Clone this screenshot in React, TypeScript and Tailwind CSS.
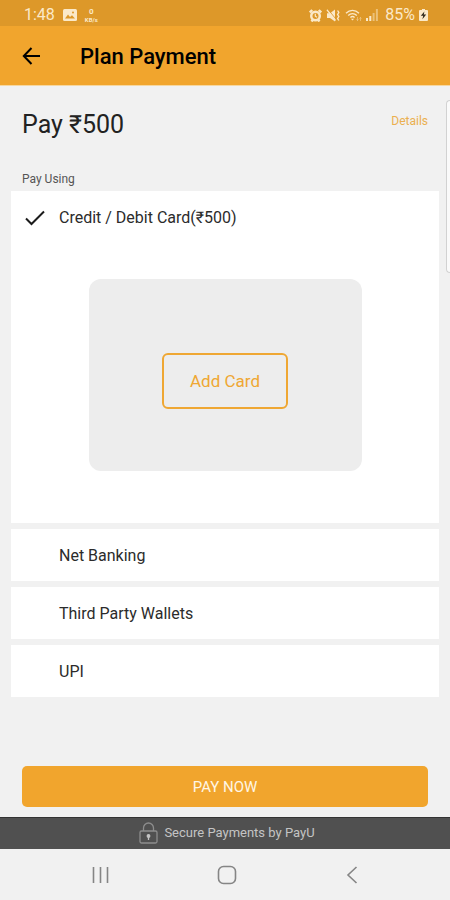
import { useState } from "react";

const methods = [
  { id: "card", label: "Credit / Debit Card(₹500)" },
  { id: "netbanking", label: "Net Banking" },
  { id: "wallets", label: "Third Party Wallets" },
  { id: "upi", label: "UPI" },
];

function StatusBar() {
  return (
    <div className="flex h-[26px] items-center justify-between bg-[#dd9829] pl-6 pr-[22px] pt-1 text-[#fbe9c8]">
      <div className="flex items-center gap-2">
        <span className="text-base leading-5">1:48</span>
        <svg className="h-3 w-[14px]" viewBox="0 0 14 12" fill="none">
          <rect width="14" height="12" rx="1.5" fill="currentColor" />
          <path d="M2 9.5 5 5.5l2 2.4 2-1.6 3 3.2z" fill="#dd9829" />
          <circle cx="10" cy="3.5" r="1" fill="#dd9829" />
        </svg>
        {/* network speed */}
        <span className="flex flex-col items-center font-bold">
          <span className="text-[8px] leading-[9px]">0</span>
          <span className="text-[6px] leading-[7px]">KB/s</span>
        </span>
      </div>

      <div className="flex items-center gap-1">
        {/* alarm */}
        <svg className="h-[13px] w-[13px]" viewBox="0 0 13 13" fill="none">
          <circle cx="6.5" cy="7" r="5.5" fill="currentColor" />
          <path d="M.8 3.5 3.2 1M12.2 3.5 9.8 1M2.5 12.5l1.5-2M10.5 12.5 9 10.5" stroke="currentColor" strokeWidth="2.4" />
          <circle cx="6.5" cy="7" r="3" fill="#dd9829" />
          <path d="M6.3 4.8V7.2L8 8.3" stroke="currentColor" strokeWidth="1.2" />
        </svg>
        {/* vibrate / muted */}
        <svg className="h-[13px] w-[14px]" viewBox="0 0 14 13" fill="none">
          <path d="M1 4.2h3L9 .5v12L4 9H1z" fill="currentColor" />
          <path d="M1 .8 9.5 11.5" stroke="currentColor" strokeWidth="1.4" />
          <path d="M2 .2 10 10.2" stroke="#dd9829" strokeWidth=".8" />
          <path d="m11.6 1.5 1.2 2-1.2 2 1.2 2-1.2 2 1.2 2" stroke="currentColor" strokeWidth="1.4" />
        </svg>
        {/* wifi */}
        <svg className="ml-px h-[13px] w-[17px]" viewBox="0 0 17 13" fill="none">
          <path d="M1 4.3C4.8.5 10.2.5 14 4.3M3.2 6.5c2.5-2.5 6.1-2.5 8.6 0M5.4 8.5c1.2-1.2 3-1.2 4.2 0" stroke="currentColor" strokeWidth="1.3" />
          <path d="m7.5 11.5-1.6-1.8h3.2z" fill="currentColor" />
          <path d="M12.5 8v3.5m-1-1.2 1 1.2 1-1.2M15.5 12V8.5m-1 1 1-1 1 1" stroke="currentColor" strokeWidth=".7" opacity=".6" />
        </svg>
        {/* signal */}
        <svg className="h-3 w-3" viewBox="0 0 12 12" fill="currentColor">
          <path d="M0 9h2v3H0zM3.3 7h2v5h-2z" />
          <path d="M6.6 4h2v8h-2zM9.9 0h2v12h-2z" opacity=".5" />
        </svg>
        <span className="ml-[3px] text-base leading-5">85%</span>
        <svg className="h-3 w-[9px]" viewBox="0 0 9 12">
          <path d="M3 0h3v1h2q1 0 1 1v9q0 1-1 1H1q-1 0-1-1V2q0-1 1-1h2z" fill="currentColor" />
          <path d="M5.4 2.4 1.8 6.8h2.4l-.8 3.4 3.8-4.6H4.8z" fill="#30291c" />
        </svg>
      </div>
    </div>
  );
}

function Check() {
  return (
    <svg className="h-4 w-5" viewBox="0 0 20 16" fill="none">
      <path d="m1 8.5 5.5 5.5L19 1.5" stroke="#1b1b1b" strokeWidth="2" />
    </svg>
  );
}

export default function App() {
  const [selected, setSelected] = useState("card");

  return (
    <div className="relative flex min-h-screen flex-col bg-[#f1f1f1] font-[Roboto,sans-serif] text-[#2b2b2b]">
      <StatusBar />

      <header className="flex h-[60px] items-center gap-[38px] border-b border-[#f6d7a0] bg-[#f1a52d] px-[22px] text-black">
        <button type="button" aria-label="Back">
          <svg className="h-5 w-5" viewBox="0 0 20 20" fill="none">
            <path d="M18 10H2M9.5 2 1.8 10l7.7 8" stroke="currentColor" strokeWidth="2" />
          </svg>
        </button>
        <h1 className="pt-0.5 text-[22px] font-medium leading-7">Plan Payment</h1>
      </header>

      <main className="flex grow flex-col pb-[10px]">
        <div className="flex items-center justify-between px-[22px] pt-[23px]">
          <h2 className="text-[25px] leading-8 text-[#222]">Pay ₹500</h2>
          <a href="#details" className="mb-2 text-xs leading-4 text-[#ebb04f]">Details</a>
        </div>
        <p className="mt-[30px] px-[22px] text-xs leading-4 text-[#555]">Pay Using</p>

        <div className="mx-[11px] mt-1 flex flex-col gap-[6px]">
          {methods.map((m) => (
            <section key={m.id} className="bg-white">
              <button
                type="button"
                aria-pressed={selected === m.id}
                onClick={() => setSelected(m.id)}
                className="flex h-[52px] w-full items-center pl-[14px] pt-0.5 text-left text-base"
              >
                <span className="w-[34px]">{selected === m.id && <Check />}</span>
                {m.label}
              </button>
              {m.id === "card" && selected === "card" && (
                <div className="flex justify-center px-4 pb-[52px] pt-9">
                  <div className="flex h-48 w-full max-w-[273px] items-center justify-center rounded-xl bg-[#ededed] pt-3">
                    <button type="button" className="rounded-md border-2 border-[#efa733] px-[26px] py-3 text-[17px] leading-7 text-[#efa733]">
                      Add Card
                    </button>
                  </div>
                </div>
              )}
            </section>
          ))}
        </div>

        <div className="mt-auto px-[22px] pt-6">
          <button type="button" className="h-[41px] w-full rounded-[5px] bg-[#f1a52d] pt-0.5 text-[15px] text-[#fff6e4]">
            PAY NOW
          </button>
        </div>
      </main>

      <footer>
        <div className="flex h-8 items-center justify-center gap-[6px] border-t border-[#333] bg-[#505050] pb-0.5 pl-1 text-[13px] text-[#c4c4c4]">
          <svg className="h-[22px] w-[19px]" viewBox="0 0 19 22" fill="none" stroke="#8d8d8d" strokeWidth="1.3">
            <rect x="1" y="9" width="17" height="12" rx="1.5" />
            <path d="M4.5 9V6a5 5 0 0 1 10 0v3" />
            <circle cx="9.5" cy="14" r="1.3" fill="#c4c4c4" stroke="#c4c4c4" />
            <path d="M9.5 14v4" stroke="#c4c4c4" />
          </svg>
          Secure Payments by PayU
        </div>
        <nav className="flex h-[51px] items-center justify-between pl-[91px] pr-[88px] text-[#858585]">
          <button type="button" aria-label="Recent apps">
            <svg className="h-5 w-5" viewBox="0 0 20 20" fill="none">
              <path d="M2.5 2v16M9.5 2v16M16.5 2v16" stroke="currentColor" strokeWidth="1.6" />
            </svg>
          </button>
          <button type="button" aria-label="Home">
            <svg className="h-5 w-5" viewBox="0 0 20 20" fill="none">
              <rect x="1.5" y="1.5" width="17" height="17" rx="5" stroke="currentColor" strokeWidth="1.6" />
            </svg>
          </button>
          <button type="button" aria-label="Back to previous screen">
            <svg className="h-5 w-5" viewBox="0 0 20 20" fill="none">
              <path d="m14.5 2-8.5 8 8.5 8" stroke="currentColor" strokeWidth="1.6" />
            </svg>
          </button>
        </nav>
      </footer>

      {/* edge panel handle */}
      <div className="absolute right-0 top-[100px] h-[173px] w-1 rounded-l-md border border-r-0 border-[#d2d2d2] bg-[#fafafa]" />
    </div>
  );
}
